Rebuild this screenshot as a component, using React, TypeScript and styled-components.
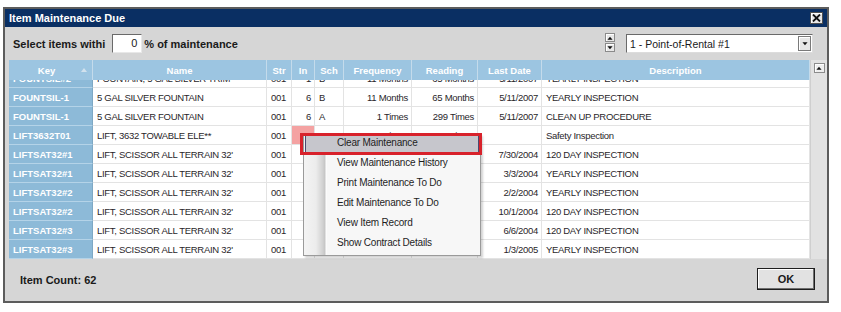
import React from 'react';
import styled, { createGlobalStyle } from 'styled-components';

const Global = createGlobalStyle`
  html, body { margin: 0; padding: 0; background: #ffffff; }
  body { font-family: "Liberation Sans", Arial, sans-serif; color: #222; }
  * { box-sizing: border-box; }
`;

const COLS = '84px 174px 25px 23px 29px 68px 66px 64px 268px';

const Page = styled.div`
  padding: 7px 0 0 3px;
`;

const Window = styled.div`
  position: relative;
  width: 826px;
  height: 296px;
  border: 2px solid #5c5c5c;
  background: #d6d6d6;
  display: flex;
  flex-direction: column;
`;

const TitleBar = styled.div`
  height: 18px;
  flex: none;
  background: #0a2f63;
  color: #fff;
  display: flex;
  align-items: center;
  justify-content: space-between;
  padding: 0 4px 0 4px;
  font: bold 11px "Liberation Sans", Arial, sans-serif;
`;

const CloseButton = styled.div`
  width: 13px;
  height: 12px;
  background: #e6e6e6;
  border: 1px solid #505050;
  box-shadow: inset 1px 1px #ffffff;
  display: flex;
  align-items: center;
  justify-content: center;
`;

const Toolbar = styled.div`
  height: 33px;
  flex: none;
  display: flex;
  align-items: center;
  padding: 0 14px 0 8px;
  font: bold 11px "Liberation Sans", Arial, sans-serif;
  color: #1a1a1a;
`;

const PercentInput = styled.div`
  width: 30px;
  height: 19px;
  margin: 0 2px 0 7px;
  background: #fff;
  border-top: 1px solid #6a6a6a;
  border-left: 1px solid #6a6a6a;
  border-right: 1px solid #e8e8e8;
  border-bottom: 1px solid #e8e8e8;
  font: 11px "Liberation Sans", Arial, sans-serif;
  text-align: right;
  padding-right: 4px;
  line-height: 17px;
`;

const Spacer = styled.div`
  flex: 1;
`;

const Spinner = styled.div`
  display: flex;
  flex-direction: column;
  gap: 1px;
  margin-right: 11px;
  margin-top: -2px;
`;

const SpinButton = styled.div`
  width: 10px;
  height: 9px;
  background: #e8e8e8;
  border: 1px solid #8a8a8a;
  box-shadow: inset 1px 1px #fff;
  display: flex;
  align-items: center;
  justify-content: center;
`;

const Select = styled.div`
  width: 187px;
  height: 19px;
  background: #fff;
  border-top: 1px solid #6a6a6a;
  border-left: 1px solid #6a6a6a;
  border-right: 1px solid #dcdcdc;
  border-bottom: 1px solid #dcdcdc;
  display: flex;
  align-items: center;
  justify-content: space-between;
  padding: 0 1px 0 3px;
  font: 10.5px "Liberation Sans", Arial, sans-serif;
  color: #1a1a1a;
`;

const SelectArrow = styled.div`
  width: 13px;
  height: 15px;
  background: #e6e6e6;
  border: 1px solid #7a7a7a;
  box-shadow: inset 1px 1px #fff;
  display: flex;
  align-items: center;
  justify-content: center;
`;

const Grid = styled.div`
  height: 199px;
  flex: none;
  margin-left: 4px;
  display: flex;
  background: #fff;
`;

const Table = styled.div`
  width: 801px;
  display: flex;
  flex-direction: column;
`;

const HeaderRow = styled.div`
  display: grid;
  grid-template-columns: ${COLS};
  height: 20px;
  flex: none;
  background: #9cc5e1;
`;

const HeaderCell = styled.div<{ $sort?: boolean }>`
  position: relative;
  color: #fff;
  font: bold 9.5px "Liberation Sans", Arial, sans-serif;
  text-align: center;
  line-height: 18px;
  padding-top: 2px;
  border-right: 1px solid #c4dbeb;
  padding-right: ${(p) => (p.$sort ? '8px' : '0')};
  white-space: nowrap;
  overflow: hidden;
`;

const SortArrow = styled.span`
  position: absolute;
  right: 5px;
  top: 8px;
  width: 0;
  height: 0;
  border-left: 3px solid transparent;
  border-right: 3px solid transparent;
  border-bottom: 4px solid #d2e2ee;
`;

const Body = styled.div`
  flex: 1;
  overflow: hidden;
`;

const Rows = styled.div`
  margin-top: -11px;
`;

const Row = styled.div`
  display: grid;
  grid-template-columns: ${COLS};
  height: 19px;
`;

const KeyCell = styled.div`
  background: #8dbad8;
  color: #fff;
  font: bold 9.5px "Liberation Sans", Arial, sans-serif;
  line-height: 16px;
  padding: 2px 0 0 4px;
  border-bottom: 1px solid #b4d3e8;
  border-right: 1px solid #7ea8c4;
  white-space: nowrap;
  overflow: hidden;
`;

const Cell = styled.div<{ $align?: 'left' | 'right'; $pink?: boolean }>`
  background: ${(p) => (p.$pink ? '#f4a2a2' : '#fff')};
  color: #2a1f2a;
  font: 9.5px "Liberation Sans", Arial, sans-serif;
  letter-spacing: -0.3px;
  line-height: 16px;
  text-align: ${(p) => p.$align ?? 'left'};
  padding: 2px 3px 0 4px;
  border-bottom: 1px solid #e3e3e3;
  border-right: 1px solid #e3e3e3;
  white-space: nowrap;
  overflow: hidden;
`;

const ScrollBar = styled.div`
  width: 17px;
  background: #e2e2e2;
  border-left: 1px solid #cfcfcf;
  display: flex;
  flex-direction: column;
  align-items: center;
  padding-top: 3px;
`;

const ScrollUp = styled.div`
  width: 11px;
  height: 10px;
  background: #eeeeee;
  border: 1px solid #8c8c8c;
  box-shadow: inset 1px 1px #fff;
  display: flex;
  align-items: center;
  justify-content: center;
`;

const Footer = styled.div`
  flex: 1;
  display: flex;
  align-items: center;
  justify-content: space-between;
  padding: 0 12px 0 15px;
  font: bold 11px "Liberation Sans", Arial, sans-serif;
  color: #1a1a1a;
`;

const OkButton = styled.div`
  width: 58px;
  height: 22px;
  background: #e2e2e2;
  border: 1px solid #1e1e1e;
  box-shadow: inset -1px -1px #6e6e6e, inset 1px 1px #ffffff;
  display: flex;
  align-items: center;
  justify-content: center;
  font: bold 11px "Liberation Sans", Arial, sans-serif;
  margin-top: -2px;
`;

const Menu = styled.div`
  position: absolute;
  left: 298px;
  top: 125px;
  width: 178px;
  height: 122px;
  border: 1px solid #9a9a9a;
  background: linear-gradient(
    to right,
    #f4f4f4 0px,
    #ececec 12px,
    #d0d0d0 19px,
    #c4c4c4 21px,
    #ffffff 22px,
    #f7f7f7 23px,
    #f7f7f7 100%
  );
  box-shadow: 2px 2px 2px rgba(0, 0, 0, 0.18);
  padding: 0 1px;
`;

const MenuItem = styled.div<{ $active?: boolean }>`
  height: 20px;
  line-height: 17px;
  padding: 1px 0 0 31px;
  font: 10px "Liberation Sans", Arial, sans-serif;
  letter-spacing: -0.2px;
  color: #1e1e1e;
  border: 1px solid ${(p) => (p.$active ? '#4a4a70' : 'transparent')};
  background: ${(p) => (p.$active ? '#c6c6cc' : 'transparent')};
  white-space: nowrap;
`;

const Highlight = styled.div`
  position: absolute;
  left: 295px;
  top: 124px;
  width: 182px;
  height: 22px;
  border: 3px solid #d8222b;
  pointer-events: none;
`;

type RowData = {
  key: string;
  name: string;
  str: string;
  inn: string;
  sch: string;
  freq: string;
  reading: string;
  last: string;
  desc: string;
  pink?: boolean;
};

const rows: RowData[] = [
  { key: 'FOUNTSIL#2', name: 'FOUNTAIN, 5 GAL SILVER TRIM', str: '001', inn: '1', sch: 'B', freq: '11 Months', reading: '65 Months', last: '5/11/2007', desc: 'YEARLY INSPECTION' },
  { key: 'FOUNTSIL-1', name: '5 GAL SILVER FOUNTAIN', str: '001', inn: '6', sch: 'B', freq: '11 Months', reading: '65 Months', last: '5/11/2007', desc: 'YEARLY INSPECTION' },
  { key: 'FOUNTSIL-1', name: '5 GAL SILVER FOUNTAIN', str: '001', inn: '6', sch: 'A', freq: '1 Times', reading: '299 Times', last: '5/11/2007', desc: 'CLEAN UP PROCEDURE' },
  { key: 'LIFT3632T01', name: 'LIFT, 3632 TOWABLE ELE**', str: '001', inn: '0', sch: 'A', freq: '1 Times', reading: '313 Times', last: '', desc: 'Safety Inspection', pink: true },
  { key: 'LIFTSAT32#1', name: "LIFT, SCISSOR ALL TERRAIN 32'", str: '001', inn: '4', sch: 'A', freq: '120 Days', reading: '1590 Days', last: '7/30/2004', desc: '120 DAY INSPECTION' },
  { key: 'LIFTSAT32#1', name: "LIFT, SCISSOR ALL TERRAIN 32'", str: '001', inn: '6', sch: 'B', freq: '12 Months', reading: '75 Months', last: '3/3/2004', desc: 'YEARLY INSPECTION' },
  { key: 'LIFTSAT32#2', name: "LIFT, SCISSOR ALL TERRAIN 32'", str: '001', inn: '6', sch: 'B', freq: '12 Months', reading: '76 Months', last: '2/2/2004', desc: 'YEARLY INSPECTION' },
  { key: 'LIFTSAT32#2', name: "LIFT, SCISSOR ALL TERRAIN 32'", str: '001', inn: '4', sch: 'A', freq: '120 Days', reading: '1528 Days', last: '10/1/2004', desc: '120 DAY INSPECTION' },
  { key: 'LIFTSAT32#3', name: "LIFT, SCISSOR ALL TERRAIN 32'", str: '001', inn: '4', sch: 'A', freq: '120 Days', reading: '1645 Days', last: '6/6/2004', desc: '120 DAY INSPECTION' },
  { key: 'LIFTSAT32#3', name: "LIFT, SCISSOR ALL TERRAIN 32'", str: '001', inn: '6', sch: 'B', freq: '12 Months', reading: '73 Months', last: '1/3/2005', desc: 'YEARLY INSPECTION' },
];

const headers = ['Key', 'Name', 'Str', 'In', 'Sch', 'Frequency', 'Reading', 'Last Date', 'Description'];

const menuItems = [
  'Clear Maintenance',
  'View Maintenance History',
  'Print Maintenance To Do',
  'Edit Maintenance To Do',
  'View Item Record',
  'Show Contract Details',
];

const Tri = ({ up = true, size = 5 }: { up?: boolean; size?: number }) => (
  <svg width={size + 2} height={size} viewBox="0 0 7 4">
    {up ? <polygon points="0.5,4 6.5,4 3.5,0.5" fill="#111" /> : <polygon points="0.5,0 6.5,0 3.5,3.5" fill="#111" />}
  </svg>
);

export default function App() {
  return (
    <Page>
      <Global />
      <Window>
        <TitleBar>
          <span>Item Maintenance Due</span>
          <CloseButton>
            <svg width="9" height="8" viewBox="0 0 9 8">
              <path d="M1 0.5 L8 7.5 M8 0.5 L1 7.5" stroke="#111" strokeWidth="1.8" />
            </svg>
          </CloseButton>
        </TitleBar>
        <Toolbar>
          <span>Select items withi</span>
          <PercentInput>0</PercentInput>
          <span>% of maintenance</span>
          <Spacer />
          <Spinner>
            <SpinButton>
              <Tri up size={4} />
            </SpinButton>
            <SpinButton>
              <Tri up={false} size={4} />
            </SpinButton>
          </Spinner>
          <Select>
            <span>1 - Point-of-Rental #1</span>
            <SelectArrow>
              <Tri up={false} size={4} />
            </SelectArrow>
          </Select>
        </Toolbar>
        <Grid>
          <Table>
            <HeaderRow>
              {headers.map((h, i) => (
                <HeaderCell key={h} $sort={i === 0}>
                  {h}
                  {i === 0 && <SortArrow />}
                </HeaderCell>
              ))}
            </HeaderRow>
            <Body>
              <Rows>
                {rows.map((r, i) => (
                  <Row key={i}>
                    <KeyCell>{r.key}</KeyCell>
                    <Cell>{r.name}</Cell>
                    <Cell>{r.str}</Cell>
                    <Cell $align="right" $pink={r.pink}>{r.inn}</Cell>
                    <Cell>{r.sch}</Cell>
                    <Cell $align="right">{r.freq}</Cell>
                    <Cell $align="right">{r.reading}</Cell>
                    <Cell $align="right">{r.last}</Cell>
                    <Cell>{r.desc}</Cell>
                  </Row>
                ))}
              </Rows>
            </Body>
          </Table>
          <ScrollBar>
            <ScrollUp>
              <Tri up size={4} />
            </ScrollUp>
          </ScrollBar>
        </Grid>
        <Footer>
          <span>Item Count: 62</span>
          <OkButton>OK</OkButton>
        </Footer>
        <Menu>
          {menuItems.map((m, i) => (
            <MenuItem key={m} $active={i === 0}>
              {m}
            </MenuItem>
          ))}
        </Menu>
        <Highlight />
      </Window>
    </Page>
  );
}
